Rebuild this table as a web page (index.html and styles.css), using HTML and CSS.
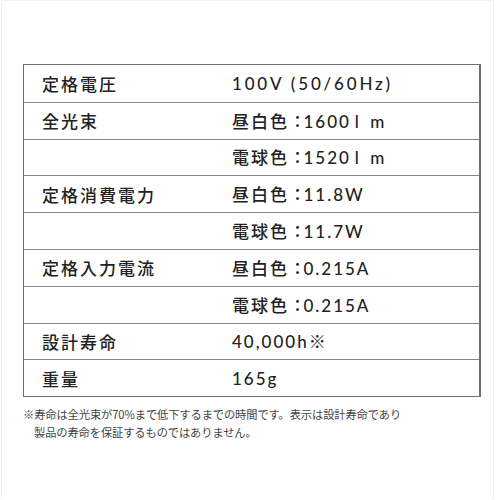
FILE: index.html
```html
<!DOCTYPE html>
<html lang="ja">
<head>
<meta charset="utf-8">
<link rel="stylesheet" href="styles.css">
</head>
<body>
<div class="frame">
  <div class="spec">
    <div class="row"><div class="label">定格電圧</div><div class="value wide">100V (50/60Hz)</div></div>
    <div class="row"><div class="label">全光束</div><div class="value">昼白色<span class="colon">：</span>1600<span class="unit">l m</span></div></div>
    <div class="row"><div class="label"></div><div class="value">電球色<span class="colon">：</span>1520<span class="unit">l m</span></div></div>
    <div class="row"><div class="label">定格消費電力</div><div class="value">昼白色<span class="colon">：</span>11.8W</div></div>
    <div class="row"><div class="label"></div><div class="value">電球色<span class="colon">：</span>11.7W</div></div>
    <div class="row"><div class="label">定格入力電流</div><div class="value">昼白色<span class="colon">：</span>0.215A</div></div>
    <div class="row"><div class="label"></div><div class="value">電球色<span class="colon">：</span>0.215A</div></div>
    <div class="row"><div class="label">設計寿命</div><div class="value">40,000h※</div></div>
    <div class="row"><div class="label">重量</div><div class="value">165g</div></div>
  </div>
  <p class="note">※寿命は全光束が70%まで低下するまでの時間です。表示は設計寿命であり<br><span class="indent">製品の寿命を保証するものではありません。</span></p>
</div>
</body>
</html>
```
FILE: styles.css
```css
html, body {
  margin: 0;
  padding: 0;
  background: #fff;
}
body {
  width: 500px;
  height: 500px;
  overflow: hidden;
  font-family: "Noto Sans CJK JP", "Noto Sans", sans-serif;
  color: #222;
}
.frame {
  margin-left: 1px;
  width: 493px;
  height: 499px;
  border-left: 1px solid #f0f0f0;
  border-right: 1px solid #eeeeee;
  border-top: 1px solid #f3f3f3;
  padding-top: 63px;
  padding-left: 21px;
  box-sizing: border-box;
}
.spec {
  width: 458px;
  border: 1px solid #707070;
  border-right-width: 2px;
  box-sizing: border-box;
}
.row {
  display: grid;
  grid-template-columns: 190px 1fr;
  align-items: center;
  height: 36.8px;
  padding-left: 18px;
  box-sizing: border-box;
  border-top: 1px solid #888;
}
.row:first-child {
  border-top: none;
}
.label, .value {
  font-size: 17px;
  font-weight: 500;
  letter-spacing: 2px;
  line-height: 1;
  white-space: nowrap;
}
.value {
  font-family: "Lato", "Noto Sans CJK JP", sans-serif;
  letter-spacing: 2px;
}
.value.wide {
  letter-spacing: 2.8px;
}
.colon {
  font-family: "Noto Sans CJK JP", sans-serif;
  letter-spacing: -2.6px;
}
.unit {
  margin-left: 4px;
  word-spacing: 3px;
}
.note {
  margin: 8px 0 0 0;
  font-size: 11.25px;
  line-height: 18px;
  color: #444;
  letter-spacing: -0.1px;
}
.indent {
  padding-left: 11px;
}
```
